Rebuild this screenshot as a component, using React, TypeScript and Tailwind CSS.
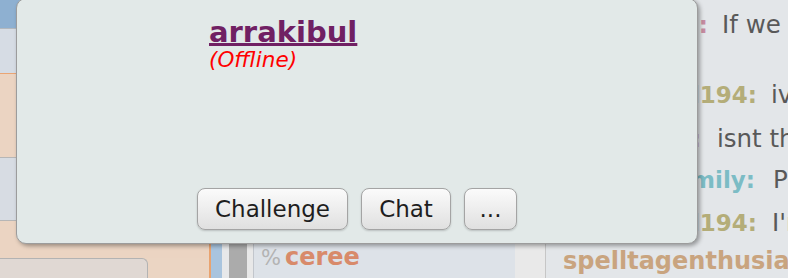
import React from "react";

const msgs = [
  { mt: "mt-[11px]", nameW: "w-[162px]", gap: "ml-[14px]", name: "Kiwi", color: "text-[#c78ca2]", text: "If we could just" },
  { mt: "mt-[42px]", nameW: "w-[211px]", gap: "ml-[14px]", name: "neil194", color: "text-[#b4ad79]", text: "ive been waiting" },
  { mt: "mt-[16px]", nameW: "w-[155px]", gap: "ml-[16px]", name: "Kiwi", color: "text-[#c78ca2]", text: "isnt that the one" },
  { mt: "mt-[13px]", nameW: "w-[209px]", gap: "ml-[18px]", name: "DreamEmily", color: "text-[#7cbcc5]", text: "Pretty sure" },
  { mt: "mt-[15px]", nameW: "w-[211px]", gap: "ml-[15px]", name: "neil194", color: "text-[#b4ad79]", text: "I'm not sure" },
];

export default function App() {
  return (
    <div className="relative w-[788px] h-[278px] overflow-hidden font-['DejaVu_Sans',sans-serif]">
      {/* background page */}
      <div className="flex h-[278px] w-[788px]">
        {/* left column */}
        <div className="flex w-[209px] flex-col bg-[#ebd5c3]">
          <div className="h-[28px] bg-[#8eb0d1]" />
          <div className="h-[1px] bg-[#b2b7bd]" />
          <div className="h-[44px] bg-[#d6dce4]" />
          <div className="h-[1px] bg-[#eaa574]" />
          <div className="h-[83px] bg-[#ebd4c2]" />
          <div className="h-[1px] bg-[#b6b6b6]" />
          <div className="h-[62px] bg-[#d7dce3]" />
          <div className="h-[1px] bg-[#b6b6b6]" />
          <div className="h-[37px] bg-[#ebd4c2]" />
          <div className="flex flex-1">
            <div className="w-[148px] rounded-tr-[6px] border-t border-r border-[#b3b3b3] bg-[#e0d8d3]" />
            <div className="flex-1" />
          </div>
        </div>
        <div className="w-[2px] bg-[#e9a36f]" />
        <div className="w-[11px] bg-[#a9c4de]" />
        <div className="w-[7px] bg-[#e7e8ea]" />
        <div className="w-[18px] bg-[#ababab]" />
        <div className="w-[6px] bg-[#e8e8e8]" />
        {/* user list panel */}
        <div className="flex w-[262px] flex-col border-l border-[#c2c6cc] bg-[#dde2e8]">
          <div className="mt-auto mb-[6px] flex items-baseline pl-[7px] text-[21px] leading-[28px] whitespace-nowrap">
            <span className="text-[#b3b3b3]">%</span>
            <span className="ml-[4px] text-[24px] font-bold text-[#d88a6a]">ceree</span>
          </div>
        </div>
        <div className="w-[30px] bg-[#e9e9e9]" />
        <div className="w-[1px] bg-[#c6c6c6]" />
        {/* chat log */}
        <div className="flex flex-1 flex-col overflow-hidden bg-[#e3e6e9] text-[23px] leading-[28px]">
          {msgs.map((m, i) => (
            <div key={i} className={`${m.mt} flex items-baseline whitespace-nowrap`}>
              <span className={`${m.nameW} shrink-0 overflow-hidden text-right font-bold ${m.color}`}>{m.name}:</span>
              <span className={`${m.gap} text-[24.5px] text-[#595959]`}>{m.text}</span>
            </div>
          ))}
          <div className="mt-[10px] pl-[17px] whitespace-nowrap text-[24px] font-bold text-[#c9a47f]">spelltagenthusiast</div>
        </div>
      </div>

      {/* user popup */}
      <div className="absolute left-[16px] top-[-2px] flex h-[246px] w-[682px] flex-col rounded-[10px] border-[1.5px] border-[#9c9c9c] bg-[#e2e9e8] shadow-[2px_2px_4px_rgba(0,0,0,0.35)]">
        <div className="pl-[192px] pt-[18px]">
          <div className="text-[29px] leading-[30px] font-bold text-[#702063] underline decoration-[3px] underline-offset-[1px]">
            arrakibul
          </div>
          <div className="text-[21.5px] leading-[26px] italic text-[#ff0000]">(Offline)</div>
        </div>
        <div className="mt-auto mb-[13px] flex justify-center gap-[13px]">
          {["Challenge", "Chat", "..."].map((b, i) => (
            <button
              key={b}
              className={`${i === 0 ? "w-[151px]" : i === 1 ? "w-[90px]" : "w-[53px]"} h-[42px] rounded-[8px] border border-[#a4a4a4] bg-linear-to-b from-[#fbfbfb] to-[#e0e0e0] text-center text-[23px] leading-[28px] text-[#1e1e1e] shadow-[0_1px_2px_rgba(0,0,0,0.18)]`}
            >
              {b}
            </button>
          ))}
        </div>
      </div>
    </div>
  );
}
